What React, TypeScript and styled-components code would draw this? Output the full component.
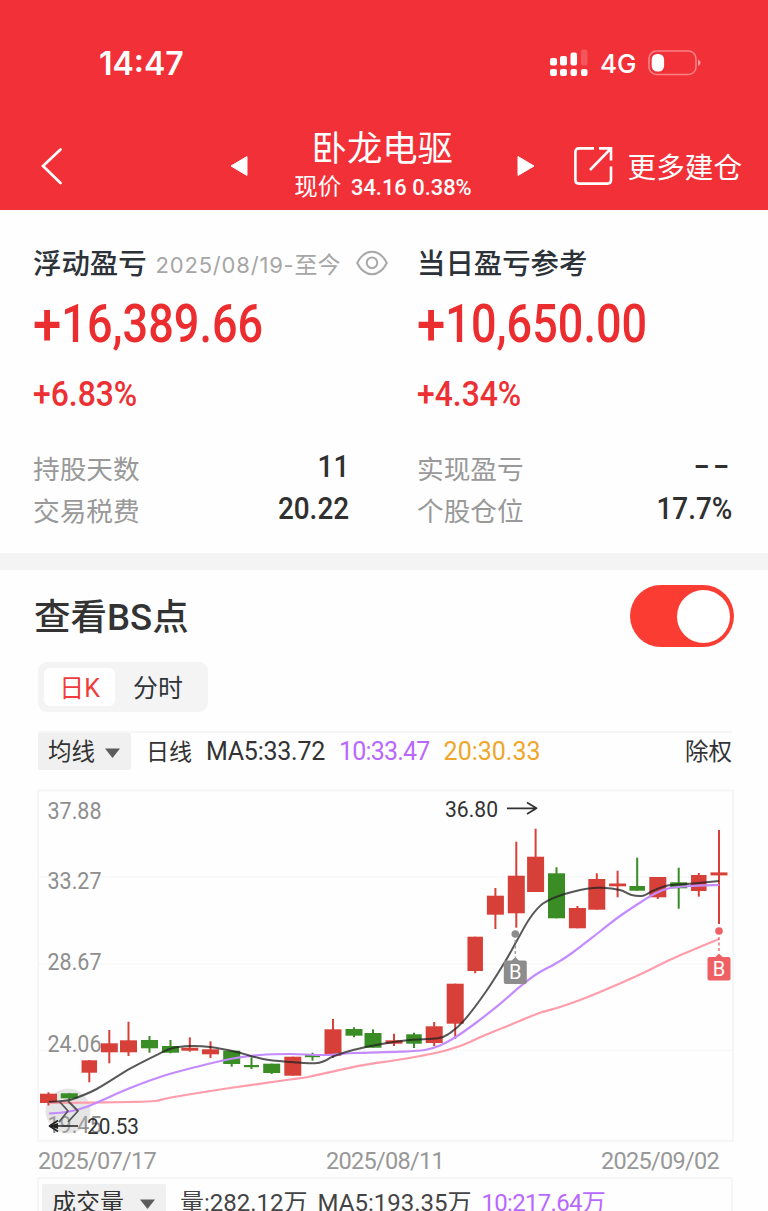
import React from 'react';
import styled, { createGlobalStyle } from 'styled-components';

const cjk = '"Noto Sans CJK SC", sans-serif';

const GlobalStyle = createGlobalStyle`
  * { box-sizing: border-box; }
  body { margin: 0; background: #fefefe; font-family: Roboto, ${cjk}; color: #333; }
`;

const Screen = styled.main`
  width: 768px;
  height: 1211px;
  overflow: hidden;
  background: #fefefe;
  display: flex;
  flex-direction: column;
`;

type TextProps = {
  $size: number;
  $color?: string;
  $weight?: number;
  $track?: number;
  $squeeze?: number;
  $drop?: number;
  $origin?: string;
  $font?: string;
};

const Text = styled.span<TextProps>`
  display: inline-block;
  white-space: nowrap;
  line-height: 1;
  font-family: ${p => p.$font ?? 'Roboto'}, ${cjk};
  font-size: ${p => p.$size}px;
  font-weight: ${p => p.$weight ?? 400};
  color: ${p => p.$color ?? 'inherit'};
  letter-spacing: ${p => p.$track ?? 0}px;
  transform: translateY(${p => p.$drop ?? 0}px) scaleX(${p => p.$squeeze ?? 1});
  transform-origin: ${p => p.$origin ?? 'left'} center;
`;

const Header = styled.header`
  height: 210px;
  flex: none;
  background: #f23038;
  color: #fff;
`;

const StatusBar = styled.div`
  height: 122px;
  padding: 4px 67px 0 99px;
  display: flex;
  align-items: center;
  justify-content: space-between;
`;

const StatusIcons = styled.div`
  display: flex;
  align-items: center;
`;

const Network = styled.div`
  width: 60px;
  padding-left: 12px;
`;

const NavBar = styled.nav`
  height: 88px;
  padding: 0 26px 0 39px;
  display: flex;
  align-items: center;
`;

const BackSlot = styled.div`
  width: 191px;
  height: 40px;
`;

const StockTitle = styled.div`
  width: 269px;
  display: flex;
  flex-direction: column;
  align-items: center;
  gap: 7px;
`;

const PriceLine = styled.div`
  display: flex;
  align-items: center;
  width: 176px;
  gap: 10px;
`;

const MoreAction = styled.div`
  display: flex;
  align-items: center;
  gap: 14px;
  margin-left: 39px;
`;

const Summary = styled.section`
  height: 343px;
  flex: none;
  padding: 38px 35px 0 33px;
  display: grid;
  grid-template-columns: 316px 315px;
  column-gap: 68px;
  align-content: start;
`;

const Column = styled.div`
  display: flex;
  flex-direction: column;
`;

const ColumnTitle = styled.div`
  height: 30px;
  display: flex;
  align-items: center;
  color: #2c3238;
`;

const Period = styled.div`
  display: flex;
  align-items: center;
  margin-left: 9px;
  color: #a6a6a6;
  flex: none;
`;

const EyeSlot = styled.div`
  margin-left: 15px;
  display: flex;
  flex: none;
`;

const Amount = styled.div`
  height: 92px;
  display: flex;
  align-items: center;
  color: #ec2d30;
`;

const Sign = styled.span`
  font-size: 60px;
  line-height: 0;
  vertical-align: -3px;
`;

const Percent = styled.div`
  height: 44px;
  display: flex;
  align-items: center;
  color: #ec3033;
`;

const Figures = styled.dl`
  margin: 33px 0 0;
`;

const Figure = styled.div`
  height: 42px;
  display: flex;
  align-items: center;
  justify-content: space-between;
`;

const Label = styled.dt`
  color: #999;
  display: flex;
`;

const Value = styled.dd`
  margin: 0;
  padding-bottom: 4px;
  color: #303030;
  display: flex;
`;

const Gap = styled.div`
  height: 17px;
  flex: none;
  background: #f4f4f4;
`;

const ChartSection = styled.section`
  padding: 15px 34px 0 34px;
  display: flex;
  flex-direction: column;
`;

const SectionHead = styled.div`
  height: 62px;
  display: flex;
  align-items: center;
  justify-content: space-between;
`;

const Switch = styled.button`
  width: 104px;
  height: 62px;
  border: 0;
  padding: 0 4px;
  border-radius: 31px;
  background: #fa3c32;
  display: flex;
  align-items: center;
  justify-content: flex-end;
`;

const Knob = styled.span`
  width: 53px;
  height: 53px;
  border-radius: 50%;
  background: #fff;
`;

const Tabs = styled.div`
  margin: 15px 0 0 4px;
  width: 170px;
  height: 50px;
  padding: 6px;
  border-radius: 9px;
  background: #f4f4f4;
  display: flex;
`;

const Tab = styled.div<{ $active?: boolean }>`
  width: ${p => (p.$active ? 71 : 86)}px;
  border-radius: 6px;
  background: ${p => (p.$active ? '#fff' : 'transparent')};
  color: ${p => (p.$active ? '#f23b3b' : '#2f353b')};
  display: flex;
  align-items: center;
  justify-content: center;
`;

const Legend = styled.div`
  margin: 19px 2px 0 4px;
  height: 39px;
  border-top: 2px solid #f6f6f6;
  display: flex;
  align-items: center;
`;

const Picker = styled.div<{ $width: number }>`
  width: ${p => p.$width}px;
  height: 37px;
  flex: none;
  border-radius: 2px;
  background: #f0f0f0;
  padding: 0 10px;
  display: flex;
  align-items: center;
  justify-content: space-between;
`;

const Readings = styled.div`
  flex: 1;
  display: flex;
  align-items: center;
  gap: 14px;
  padding-left: 15px;
`;

const Plot = styled.svg`
  display: block;
  margin: 19px 0 0 3px;
  flex: none;
`;

const Dates = styled.div`
  height: 35px;
  padding: 4px 0 0 4px;
  display: grid;
  grid-template-columns: 288px 275px auto;
  align-items: center;
  color: #989898;
`;

const Volume = styled.div`
  margin: 0 1px 0 3px;
  height: 60px;
  flex: none;
  border: 2px solid #f6f6f6;
  padding: 5px 0 0 3px;
  display: flex;
  align-items: flex-start;
`;

const VolumeReadings = styled.div`
  height: 37px;
  display: flex;
  align-items: center;
  gap: 10px;
  padding-left: 14px;
  color: #444;
`;

type Candle = [x: number, top: number, bottom: number, high: number, low: number, up: 0 | 1, width?: number];

const candles: Candle[] = [
  [48.5, 1093.7, 1103, 1092.3, 1105.5, 1],
  [69.3, 1093.3, 1098.3, 1093, 1100, 0],
  [89.3, 1060.3, 1072.7, 1060, 1082.3, 1, 15.5],
  [109.3, 1043.3, 1052.3, 1030, 1063.3, 1],
  [128.5, 1040.3, 1052.3, 1021.7, 1056, 1],
  [149.5, 1040, 1048.3, 1036, 1052.7, 0],
  [170.5, 1046, 1052.7, 1040, 1053.3, 0],
  [189.8, 1047.7, 1050.7, 1037.3, 1051.7, 1],
  [210.5, 1049.3, 1054.3, 1041.3, 1058, 1],
  [231.7, 1050.7, 1064, 1050.7, 1066.7, 0],
  [251.5, 1065, 1067.2, 1057.3, 1069, 0, 15],
  [271.7, 1063.7, 1073, 1063.7, 1074, 0],
  [292.8, 1056.7, 1075.7, 1056.7, 1075.7, 1],
  [312.5, 1055, 1057.2, 1052.7, 1060.7, 0, 15],
  [333, 1029.3, 1055.7, 1019, 1057.7, 1],
  [354, 1029, 1035.7, 1027.3, 1037.3, 0],
  [373, 1033, 1047.7, 1029.3, 1047.7, 0],
  [394, 1040.3, 1043.7, 1033.7, 1046, 1],
  [414, 1034.3, 1043.7, 1032.7, 1048, 0, 15.5],
  [434.2, 1026.3, 1043, 1022, 1046, 1],
  [455.2, 983.7, 1023.7, 983.7, 1039, 1],
  [475.2, 936.7, 971, 936.7, 973.3, 1, 15.5],
  [495.4, 895.7, 914.7, 888, 929, 1],
  [516.3, 875.7, 913.3, 841.7, 927.7, 1],
  [535.6, 856.7, 892, 828.7, 892, 1],
  [556.5, 873.3, 918.3, 867.3, 918.3, 0],
  [577.4, 908, 928.3, 906, 928.3, 1],
  [596.8, 879, 909.7, 873.3, 909.7, 1],
  [617.6, 883.5, 886.3, 870.7, 897.3, 1],
  [637.2, 886, 890.7, 857.7, 890.7, 0, 15.5],
  [657.8, 877, 897.3, 877, 899, 1],
  [678.7, 882.3, 888.3, 867.7, 908.7, 0],
  [698.8, 875, 891, 873, 896.7, 1, 15.5],
  [719, 872.4, 875.4, 830, 924, 1],
];

type Point = [number, number];

const ma5: Point[] = [
  [49, 1102], [62, 1101], [73, 1099], [96.7, 1089], [130, 1068.7], [158, 1054.3], [173, 1048], [190, 1046], [210, 1047],
  [236.7, 1052], [263, 1059], [290, 1062], [315, 1063.3], [325, 1060.7], [333, 1056.5], [353, 1050], [383, 1043.7],
  [410, 1040], [438, 1038.3], [450, 1033], [463, 1021.7], [485, 993], [505, 961.7], [516.7, 941], [530, 918],
  [543, 903.5], [563, 894.5], [586.7, 888.7], [601.7, 887.7], [620, 890], [631.7, 895], [643, 895.7], [653, 890.7],
  [666.7, 885.7], [686.7, 884], [719, 881],
];

const ma10: Point[] = [
  [49, 1113.5], [66, 1112], [86, 1107], [130, 1088], [163, 1076], [196, 1067], [230, 1059], [260, 1055], [290, 1054],
  [325, 1055], [353, 1053], [400, 1051.7], [425, 1050], [440, 1045.5], [455, 1037.5], [473, 1025], [496.7, 1006.7],
  [520, 986.7], [536.7, 974], [556.7, 963], [572, 953], [600, 931.5], [620, 916], [643, 900.7], [656.7, 892.7],
  [670, 888], [690, 886], [719, 885],
];

const ma20: Point[] = [
  [49, 1103], [130, 1102], [155, 1101], [171, 1097.5], [230, 1088], [290, 1079.5], [310, 1076.5], [360, 1065.7],
  [400, 1059.5], [436.7, 1052.7], [460, 1046], [483, 1036], [510, 1025], [536.7, 1014], [560, 1007], [580, 1000],
  [600, 992], [636.7, 976], [673, 958.5], [719, 939],
];

function curve(points: Point[]) {
  return points
    .map(([x, y], i) => {
      if (i === 0) return `M${x} ${y}`;
      const a = points[Math.max(0, i - 2)];
      const b = points[i - 1];
      const d = points[Math.min(points.length - 1, i + 1)];
      return `C${b[0] + (x - a[0]) / 6} ${b[1] + (y - a[1]) / 6} ${x - (d[0] - b[0]) / 6} ${y - (d[1] - b[1]) / 6} ${x} ${y}`;
    })
    .join('');
}

const axis: [string, number][] = [['37.88', 811], ['33.27', 881], ['28.67', 962], ['24.06', 1043.5], ['19.45', 1125]];

function ChartText({ x, y, width, size, fill, children }: {
  x: number; y: number; width: number; size: number; fill: string; children: string;
}) {
  return (
    <text x={x} y={y + size * 0.356} textLength={width} lengthAdjust="spacingAndGlyphs"
      fontFamily="Roboto, sans-serif" fontSize={size} fill={fill}>{children}</text>
  );
}

function BuyMark({ x, dotY, y, fill }: { x: number; dotY: number; y: number; fill: string }) {
  return (
    <g>
      <circle cx={x} cy={dotY} r="3.8" fill={fill} />
      <path d={`M${x} ${dotY + 6}V${y - 4}`} stroke={fill} strokeWidth="1.6" strokeDasharray="3 2.5" opacity=".8" />
      <path d={`M${x - 4} ${y}L${x} ${y - 4}L${x + 4} ${y}Z`} fill={fill} />
      <rect x={x - 11.5} y={y - 0.5} width="23" height="23.5" rx="2" fill={fill} />
      <text x={x} y={y + 18} textAnchor="middle" fontFamily="Roboto, sans-serif" fontSize="20" fill="#fff">B</text>
    </g>
  );
}

function CandleChart() {
  return (
    <Plot width="697" height="353" viewBox="37 789 697 353">
      <rect x="38" y="790.5" width="695" height="350.5" fill="none" stroke="#f6f6f6" strokeWidth="2" />
      <path d="M39 877H732M39 964H732M39 1050.5H732" stroke="#f6f6f6" strokeWidth="1.5" strokeDasharray="3 1" />
      {axis.map(([label, y]) => (
        <ChartText key={label} x={47.5} y={y} width={54} size={23.5} fill="#8e8e8e">{label}</ChartText>
      ))}
      <circle cx="68" cy="1111" r="22.5" fill="#bbb" opacity=".36" />
      {candles.map(([x, top, bottom, high, low, up, width = 17]) => (
        <g key={x} fill={up ? '#d64038' : '#3a8c25'}>
          <rect x={x - 1} y={high} width="2" height={low - high} />
          <rect x={x - width / 2} y={top} width={width} height={bottom - top} />
        </g>
      ))}
      <g fill="none" strokeLinejoin="round">
        <path d={curve(ma20)} stroke="#ff9dab" strokeWidth="2.2" />
        <path d={curve(ma10)} stroke="#c48bff" strokeWidth="2.2" />
        <path d={curve(ma5)} stroke="#222" strokeOpacity=".76" strokeWidth="2" />
        <path d="M59 1101l9 10l-9 11M68 1101l10 10l-10 11" stroke="#555" strokeWidth="1.8" />
        <path d="M78 1126H49M58 1120.5L49.5 1126L58 1131.5" stroke="#222" strokeWidth="1.7" />
        <path d="M49 1126l9-3v6z" fill="#222" />
        <path d="M507 808.3H536M527 802.5L536.5 808.3L527 814" stroke="#333" strokeWidth="1.7" />
      </g>
      <ChartText x={87} y={1126.5} width={52} size={22} fill="#333">20.53</ChartText>
      <ChartText x={445} y={809} width={53} size={21.5} fill="#333">36.80</ChartText>
      <BuyMark x={515.3} dotY={934} y={961} fill="#8d8d8d" />
      <BuyMark x={719} dotY={931} y={957.5} fill="#ef6065" />
    </Plot>
  );
}

function SignalIcon() {
  return (
    <svg width="38" height="28" viewBox="0 0 38 28" fill="#fff">
      <rect y="9" width="7" height="7.5" rx="2" />
      <rect x="10" y="7" width="7" height="9.5" rx="2" />
      <rect x="20.5" y="3.5" width="6.5" height="13" rx="2" />
      <rect x="31" y="0.5" width="6.5" height="16" rx="2" opacity=".18" />
      <rect y="20" width="7" height="7" rx="2" />
      <rect x="10" y="20" width="7" height="7" rx="2" />
      <rect x="20.5" y="20" width="6.5" height="7" rx="2" />
      <rect x="31" y="20" width="6.5" height="7" rx="2" />
    </svg>
  );
}

function BatteryIcon() {
  return (
    <svg width="53" height="26" viewBox="0 0 53 26" fill="none">
      <rect x="1" y="1" width="47" height="23.5" rx="7.5" stroke="#fff" strokeOpacity=".4" strokeWidth="1.6" />
      <rect x="3.7" y="4" width="12.4" height="17.5" rx="5.5" fill="#fff" />
      <path d="M50 9.5q2.6 1.2 2.6 3.3t-2.6 3.3z" fill="#fff" fillOpacity=".5" />
    </svg>
  );
}

function BackIcon() {
  return (
    <svg width="24" height="40" viewBox="0 0 24 40" fill="none">
      <path d="M21.5 3.5L4 20L21.5 37" stroke="#fff" strokeWidth="2.7" strokeLinecap="round" />
    </svg>
  );
}

function StepIcon({ next }: { next?: boolean }) {
  return (
    <svg width="18" height="22" viewBox="0 0 18 22">
      <path d={next ? 'M1 1.5L17 11L1 20.5Z' : 'M17 1.5L1 11L17 20.5Z'} fill="#fff" stroke="#fff" strokeLinejoin="round" />
    </svg>
  );
}

function ShareIcon() {
  return (
    <svg width="40" height="40" viewBox="0 0 40 40" fill="none" stroke="#fff" strokeWidth="2.6">
      <path d="M20 2.4H5Q1.4 2.4 1.4 6V34Q1.4 37.6 5 37.6H33.5Q37 37.6 37 34V20.5" />
      <path d="M25 2.4H37V14.5M37 2.4L16 24" />
    </svg>
  );
}

function EyeIcon() {
  return (
    <svg width="32" height="26" viewBox="0 0 32 26" fill="none" stroke="#a8a8a8" strokeWidth="2">
      <path d="M1.2 13C5 5.5 10 1.8 16 1.8S27 5.5 30.8 13C27 20.5 22 24.2 16 24.2S5 20.5 1.2 13Z" />
      <circle cx="16" cy="12.7" r="5.3" />
    </svg>
  );
}

function Caret() {
  return (
    <svg width="17" height="15" viewBox="0 0 17 15">
      <path d="M1 4.5H16L8.5 14Z" fill="#5c5c5c" />
    </svg>
  );
}

function Money({ children }: { children: string }) {
  return (
    <Amount>
      <Text $size={53} $weight={500} $squeeze={0.85}><Sign>{children[0]}</Sign>{children.slice(1)}</Text>
    </Amount>
  );
}

function FigureRow({ label, children }: { label: string; children: React.ReactNode }) {
  return (
    <Figure>
      <Label><Text $size={26.7} $drop={2}>{label}</Text></Label>
      <Value>{children}</Value>
    </Figure>
  );
}

export default function App() {
  return (
    <Screen>
      <GlobalStyle />
      <Header>
        <StatusBar>
          <Text $size={32} $weight={600} $font="Inter" $drop={1}>14:47</Text>
          <StatusIcons>
            <SignalIcon />
            <Network><Text $size={26} $weight={500} $font="Inter" $drop={1}>4G</Text></Network>
            <BatteryIcon />
          </StatusIcons>
        </StatusBar>
        <NavBar>
          <BackSlot><BackIcon /></BackSlot>
          <StepIcon />
          <StockTitle>
            <Text $size={35.3} $drop={-1.5}>卧龙电驱</Text>
            <PriceLine>
              <Text $size={23.5} $drop={1}>现价</Text>
              <Text $size={22.5} $weight={500} $squeeze={0.972}>34.16 0.38%</Text>
            </PriceLine>
          </StockTitle>
          <StepIcon next />
          <MoreAction>
            <ShareIcon />
            <Text $size={28.6} $drop={1.5}>更多建仓</Text>
          </MoreAction>
        </NavBar>
      </Header>

      <Summary>
        <Column>
          <ColumnTitle>
            <Text $size={28.4} $weight={500} $drop={2}>浮动盈亏</Text>
            <Period>
              <Text $size={22} $font="Inter" $track={0.8} $drop={2}>2025/08/19-</Text>
              <Text $size={23} $drop={2}>至今</Text>
            </Period>
            <EyeSlot><EyeIcon /></EyeSlot>
          </ColumnTitle>
          <Money>+16,389.66</Money>
          <Percent><Text $size={35} $weight={500} $squeeze={0.91} $drop={1.5}>+6.83%</Text></Percent>
          <Figures>
            <FigureRow label="持股天数"><Text $size={31} $weight={500} $squeeze={0.9} $origin="right">11</Text></FigureRow>
            <FigureRow label="交易税费"><Text $size={31} $weight={500} $squeeze={0.9} $origin="right">20.22</Text></FigureRow>
          </Figures>
        </Column>
        <Column>
          <ColumnTitle><Text $size={28.4} $weight={500} $drop={2}>当日盈亏参考</Text></ColumnTitle>
          <Money>+10,650.00</Money>
          <Percent><Text $size={35} $weight={500} $squeeze={0.91} $drop={1.5}>+4.34%</Text></Percent>
          <Figures>
            <FigureRow label="实现盈亏"><Text $size={38} $track={2} $font="Inter" $drop={-2}>--</Text></FigureRow>
            <FigureRow label="个股仓位"><Text $size={31} $weight={500} $squeeze={0.9} $origin="right">17.7%</Text></FigureRow>
          </Figures>
        </Column>
      </Summary>

      <Gap />

      <ChartSection>
        <SectionHead>
          <Text $size={36.5} $weight={500} $drop={2}>查看BS点</Text>
          <Switch><Knob /></Switch>
        </SectionHead>
        <Tabs>
          <Tab $active><Text $size={25} $drop={1}>日K</Text></Tab>
          <Tab><Text $size={25} $drop={1}>分时</Text></Tab>
        </Tabs>
        <Legend>
          <Picker $width={93}><Text $size={23.5} $drop={1}>均线</Text><Caret /></Picker>
          <Readings>
            <Text $size={23} $drop={1}>日线</Text>
            <Text $size={25} $track={-0.25}>MA5:33.72</Text>
            <Text $size={25} $track={-0.8} $color="#b968ff">10:33.47</Text>
            <Text $size={25} $color="#efa62a">20:30.33</Text>
          </Readings>
          <Text $size={23.5} $drop={1}>除权</Text>
        </Legend>
        <CandleChart />
        <Dates>
          <Text $size={23.5} $track={-0.7}>2025/07/17</Text>
          <Text $size={23.5} $track={-0.7}>2025/08/11</Text>
          <Text $size={23.5} $track={-0.7}>2025/09/02</Text>
        </Dates>
        <Volume>
          <Picker $width={124}><Text $size={24}>成交量</Text><Caret /></Picker>
          <VolumeReadings>
            <Text $size={24}>量:282.12万</Text>
            <Text $size={24}>MA5:193.35万</Text>
            <Text $size={24} $track={-0.7} $color="#b968ff">10:217.64万</Text>
          </VolumeReadings>
        </Volume>
      </ChartSection>
    </Screen>
  );
}
